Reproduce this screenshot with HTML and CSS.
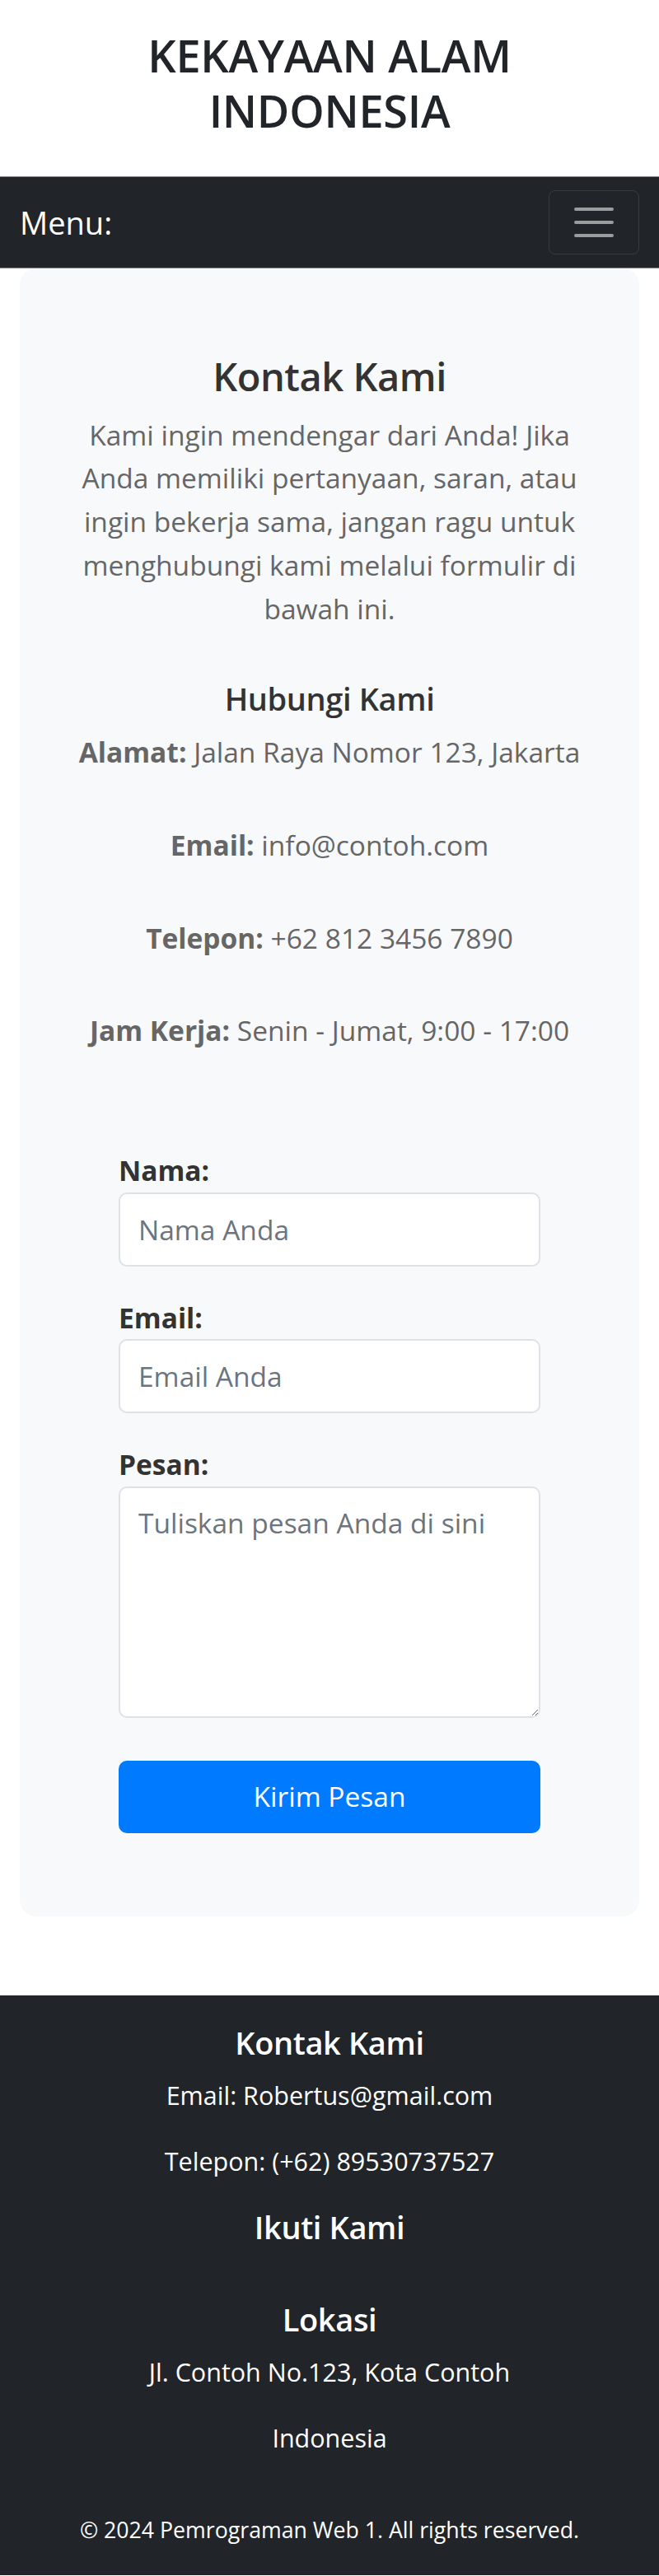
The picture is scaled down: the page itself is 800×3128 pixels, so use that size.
FILE: index.html
```html
<!DOCTYPE html>
<html lang="id">
<head>
<meta charset="utf-8">
<title>Kontak Kami - Kekayaan Alam Indonesia</title>
<link rel="stylesheet" href="styles.css">
</head>
<body>
<header class="site-header">
  <h1 class="site-title">KEKAYAAN ALAM INDONESIA</h1>
</header>

<nav class="navbar">
  <span class="navbar-brand">Menu:</span>
  <button class="navbar-toggler" type="button" aria-label="Toggle navigation">
    <svg class="toggler-icon" width="60" height="60" viewBox="0 0 30 30" aria-hidden="true">
      <path d="M4 7h22M4 15h22M4 23h22" stroke="rgba(255,255,255,0.55)" stroke-width="2" stroke-linecap="round" stroke-miterlimit="10" fill="none"/>
    </svg>
  </button>
</nav>

<main class="page">
  <section class="contact-card">
    <h2 class="contact-title">Kontak Kami</h2>
    <p class="contact-intro">Kami ingin mendengar dari Anda! Jika Anda memiliki pertanyaan, saran, atau ingin bekerja sama, jangan ragu untuk menghubungi kami melalui formulir di bawah ini.</p>

    <div class="contact-info">
      <h5 class="info-title">Hubungi Kami</h5>
      <p class="info-line"><strong>Alamat:</strong> Jalan Raya Nomor 123, Jakarta</p>
      <p class="info-line"><strong>Email:</strong> info@contoh.com</p>
      <p class="info-line"><strong>Telepon:</strong> +62 812 3456 7890</p>
      <p class="info-line"><strong>Jam Kerja:</strong> Senin - Jumat, 9:00 - 17:00</p>
    </div>

    <form class="contact-form">
      <div class="form-group">
        <label class="form-label" for="nama">Nama:</label>
        <input class="form-control" id="nama" type="text" placeholder="Nama Anda">
      </div>
      <div class="form-group">
        <label class="form-label" for="email">Email:</label>
        <input class="form-control" id="email" type="email" placeholder="Email Anda">
      </div>
      <div class="form-group form-group--last">
        <label class="form-label" for="pesan">Pesan:</label>
        <textarea class="form-control form-textarea" id="pesan" placeholder="Tuliskan pesan Anda di sini"></textarea>
      </div>
      <button class="btn-submit" type="submit">Kirim Pesan</button>
    </form>
  </section>
</main>

<footer class="site-footer">
  <div class="footer-section">
    <h5 class="footer-title">Kontak Kami</h5>
    <p class="footer-text">Email: Robertus@gmail.com</p>
    <p class="footer-text">Telepon: (+62) 89530737527</p>
  </div>
  <div class="footer-section footer-section--follow">
    <h5 class="footer-title">Ikuti Kami</h5>
  </div>
  <div class="footer-section">
    <h5 class="footer-title">Lokasi</h5>
    <p class="footer-text">Jl. Contoh No.123, Kota Contoh</p>
    <p class="footer-text">Indonesia</p>
  </div>
  <p class="copyright">&copy; 2024 Pemrograman Web 1. All rights reserved.</p>
</footer>
</body>
</html>
```

FILE: styles.css
```css
* {
  box-sizing: border-box;
}

html, body {
  margin: 0;
  padding: 0;
}

body {
  font-family: "Open Sans", "Noto Sans", "DejaVu Sans", sans-serif;
  color: #212529;
  background: #ffffff;
}

/* ---------- header ---------- */
.site-header {
  padding: 34px 24px 46px;
  text-align: center;
}

.site-title {
  max-width: 600px;
  margin: 0 auto;
  font-size: 54px;
  line-height: 67px;
  font-weight: 600;
  letter-spacing: -0.005em;
  color: #212529;
}

/* ---------- navbar ---------- */
.navbar {
  display: flex;
  align-items: center;
  justify-content: space-between;
  padding: 16px 24px;
  background: #212529;
  border-top: 1px solid #8a8d91;
  border-bottom: 1px solid #8a8d91;
}

.navbar-brand {
  font-size: 38px;
  line-height: 60px;
  color: #ffffff;
}

.navbar-toggler {
  display: flex;
  align-items: center;
  justify-content: center;
  padding: 8px 24px;
  background: transparent;
  border: 1px solid rgba(255, 255, 255, 0.1);
  border-radius: 8px;
}

.toggler-icon {
  display: block;
}

/* ---------- main card ---------- */
.page {
  padding: 0 24px;
  margin-bottom: 96px;
}

.contact-card {
  background: #f8f9fa;
  border-radius: 20px;
  padding: 102px 24px 101px;
  text-align: center;
}

.contact-title {
  margin: 0 0 14px;
  font-size: 47px;
  line-height: 59.5px;
  font-weight: 600;
  letter-spacing: -0.01em;
  color: #333333;
}

.contact-intro {
  max-width: 630px;
  margin: 0 auto 59px;
  font-size: 33.5px;
  line-height: 52.8px;
  color: #666666;
}

.info-title {
  margin: 0 0 14.5px;
  font-size: 38px;
  line-height: 48px;
  font-weight: 600;
  letter-spacing: -0.01em;
  color: #333333;
}

.info-line {
  margin: 0 0 60px;
  font-size: 33.5px;
  line-height: 52.8px;
  color: #666666;
}

.info-line:last-child {
  margin-bottom: 117px;
}

.info-line strong {
  font-weight: 700;
}

/* ---------- form ---------- */
.contact-form {
  max-width: 512px;
  margin: 0 auto;
  text-align: left;
}

.form-group {
  margin-bottom: 36px;
}

.form-group--last {
  margin-bottom: 52px;
}

.form-label {
  display: block;
  font-size: 33.5px;
  line-height: 52.5px;
  font-weight: 700;
  color: #333333;
}

.form-control {
  display: block;
  width: 100%;
  height: 90px;
  padding: 16.6px 22px;
  font-family: inherit;
  font-size: 33.5px;
  line-height: 52.8px;
  color: #333333;
  background: #ffffff;
  border: 2px solid #dee2e6;
  border-radius: 10px;
  outline: none;
}

.form-control::placeholder {
  color: #6c757d;
  opacity: 1;
}

.form-textarea {
  height: 281px;
  resize: vertical;
}

.btn-submit {
  display: block;
  width: 100%;
  height: 88px;
  padding: 0 24px;
  font-family: inherit;
  font-size: 33.5px;
  line-height: 52.8px;
  color: #ffffff;
  background: #007bff;
  border: none;
  border-radius: 10px;
}

/* ---------- footer ---------- */
.site-footer {
  background: #212529;
  color: #ffffff;
  text-align: center;
  padding: 33px 24px 31.4px;
}

.footer-title {
  margin: 0 0 16px;
  font-size: 38px;
  line-height: 48px;
  font-weight: 600;
  letter-spacing: -0.01em;
}

.footer-section--follow .footer-title {
  margin-bottom: 64px;
}

.footer-text {
  margin: 0 0 32px;
  font-size: 30.5px;
  line-height: 48px;
}

.copyright {
  margin: 64px 0 0;
  font-size: 26.7px;
  line-height: 48px;
}
```
